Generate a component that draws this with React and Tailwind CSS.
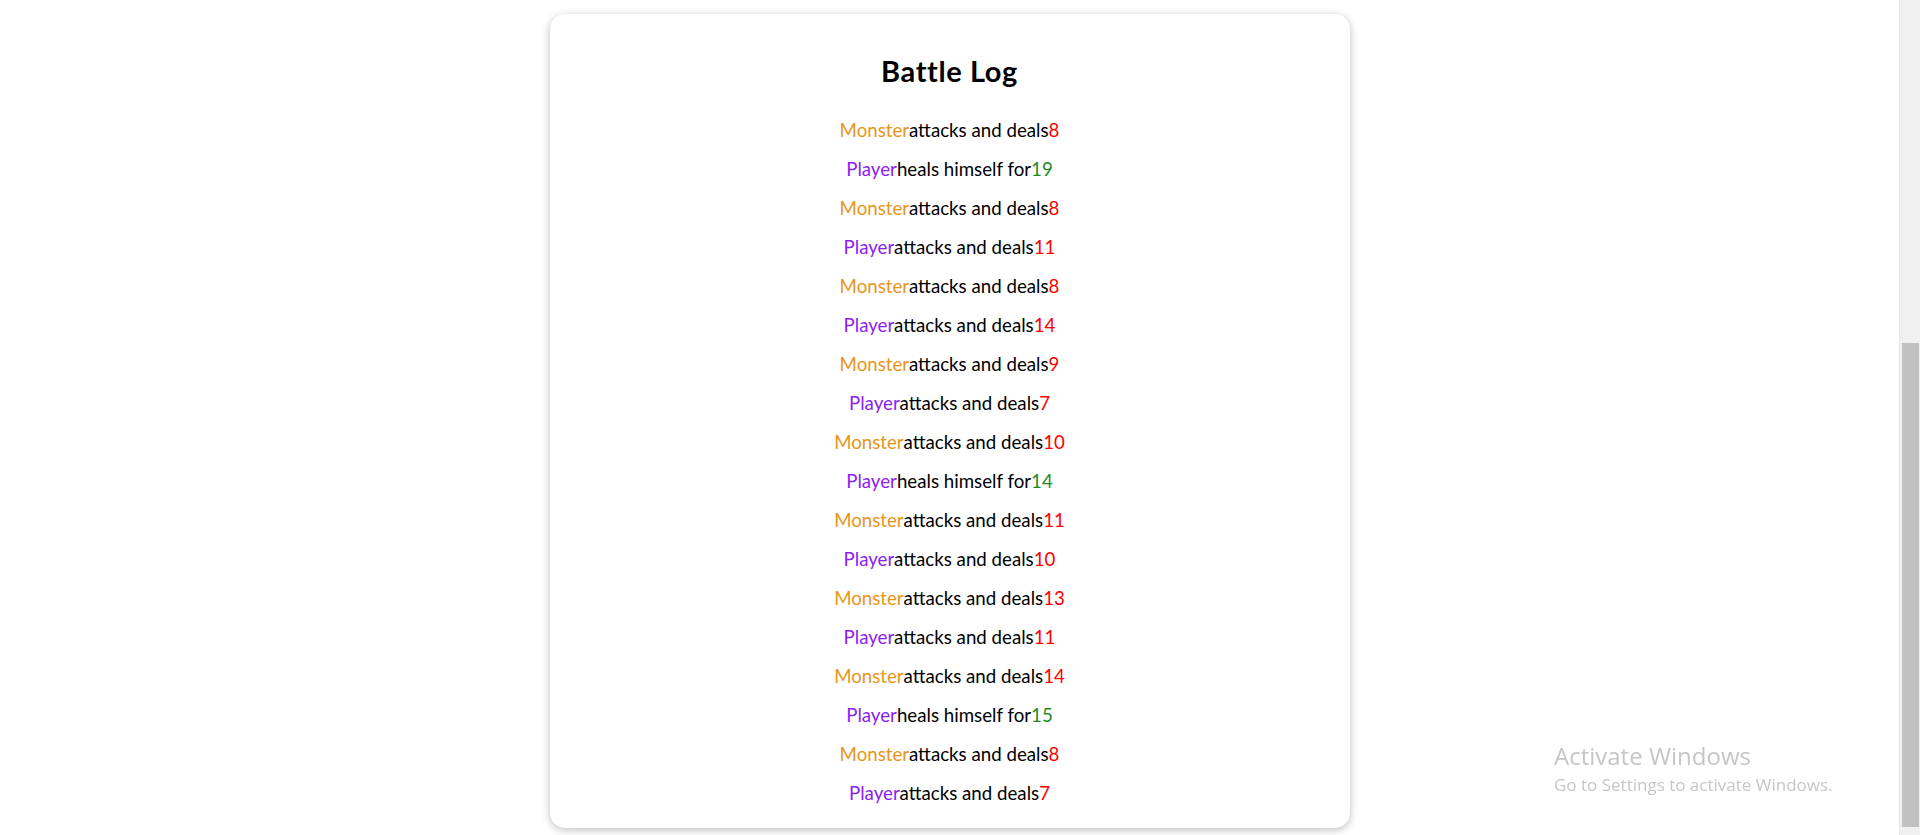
import React from 'react';

const log = [
  { who: 'monster', text: 'attacks and deals', value: 8 },
  { who: 'player', text: 'heals himself for', value: 19, heal: true },
  { who: 'monster', text: 'attacks and deals', value: 8 },
  { who: 'player', text: 'attacks and deals', value: 11 },
  { who: 'monster', text: 'attacks and deals', value: 8 },
  { who: 'player', text: 'attacks and deals', value: 14 },
  { who: 'monster', text: 'attacks and deals', value: 9 },
  { who: 'player', text: 'attacks and deals', value: 7 },
  { who: 'monster', text: 'attacks and deals', value: 10 },
  { who: 'player', text: 'heals himself for', value: 14, heal: true },
  { who: 'monster', text: 'attacks and deals', value: 11 },
  { who: 'player', text: 'attacks and deals', value: 10 },
  { who: 'monster', text: 'attacks and deals', value: 13 },
  { who: 'player', text: 'attacks and deals', value: 11 },
  { who: 'monster', text: 'attacks and deals', value: 14 },
  { who: 'player', text: 'heals himself for', value: 15, heal: true },
  { who: 'monster', text: 'attacks and deals', value: 8 },
  { who: 'player', text: 'attacks and deals', value: 7 },
];

const LogEntry = ({ entry }) => (
  <li className="h-[39px] leading-[39px] text-[18.7px] text-black">
    {entry.who === 'monster' ? (
      <span className="text-[#e8951a]">Monster</span>
    ) : (
      <span className="text-[#8b22f5]">Player</span>
    )}
    {entry.text}
    <span className={entry.heal ? 'text-[#1f8a1f]' : 'text-[#ff0000]'}>{entry.value}</span>
  </li>
);

export default function App() {
  return (
    <div className="flex h-[835px] overflow-hidden bg-white font-['Lato',sans-serif]">
      {/* page */}
      <div className="flex-1">
        <section className="mx-auto mt-[14px] w-[800px] rounded-[15px] bg-white pt-[39px] pb-[15px] text-center shadow-[0_2px_8px_rgba(0,0,0,0.26)]">
          <h2 className="h-[36px] text-[29px] font-bold leading-[36px] tracking-[0.6px] text-black">Battle Log</h2>
          <ul className="mt-[22px]">
            {log.map((entry, i) => (
              <LogEntry key={i} entry={entry} />
            ))}
          </ul>
        </section>
      </div>

      {/* browser scrollbar */}
      <div className="flex w-[21px] flex-col border-l border-[#e8e8e8] bg-[#f0f0f0]">
        <div className="h-[343px]" />
        <div className="mx-auto w-[17px] flex-1 bg-[#c1c1c1]" />
        <div className="h-[8px]" />
      </div>

      {/* windows watermark */}
      <div className="pointer-events-none fixed left-[1554px] top-[741px] font-['Open_Sans',sans-serif] text-[#c6c6c6]">
        <p className="text-[24px] leading-[30px]">Activate Windows</p>
        <p className="mt-[3px] text-[17px] leading-[22px]">Go to Settings to activate Windows.</p>
      </div>
    </div>
  );
}
